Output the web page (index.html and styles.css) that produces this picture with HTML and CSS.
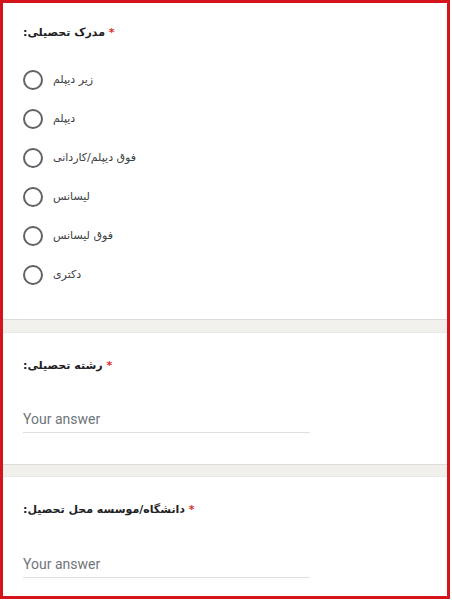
FILE: index.html
```html
<!DOCTYPE html>
<html lang="fa">
<head>
<meta charset="utf-8">
<link rel="stylesheet" href="styles.css">
</head>
<body>
<div class="frame">
  <section class="card card-first">
    <div class="title"><span dir="rtl"><span class="req">*</span> مدرک تحصیلی:</span></div>
    <div class="options">
      <label class="option"><span class="radio"></span><span class="opt-text" dir="rtl">زیر دیپلم</span></label>
      <label class="option"><span class="radio"></span><span class="opt-text" dir="rtl">دیپلم</span></label>
      <label class="option"><span class="radio"></span><span class="opt-text" dir="rtl">فوق دیپلم/کاردانی</span></label>
      <label class="option"><span class="radio"></span><span class="opt-text" dir="rtl">لیسانس</span></label>
      <label class="option"><span class="radio"></span><span class="opt-text" dir="rtl">فوق لیسانس</span></label>
      <label class="option"><span class="radio"></span><span class="opt-text" dir="rtl">دکتری</span></label>
    </div>
  </section>
  <div class="band"></div>
  <section class="card card-second">
    <div class="title"><span dir="rtl"><span class="req">*</span> رشته تحصیلی:</span></div>
    <div class="answer">Your answer</div>
  </section>
  <div class="band band-2"></div>
  <section class="card card-third">
    <div class="title"><span dir="rtl"><span class="req">*</span> دانشگاه/موسسه محل تحصیل:</span></div>
    <div class="answer">Your answer</div>
  </section>
</div>
</body>
</html>
```
FILE: styles.css
```css
html, body {
  margin: 0;
  padding: 0;
  background: #ffffff;
}
.frame {
  box-sizing: border-box;
  width: 450px;
  height: 599px;
  border: 3px solid #d3141c;
  display: flex;
  flex-direction: column;
  background: #ffffff;
  font-family: "DejaVu Sans", "Noto Sans", sans-serif;
}
.card {
  background: #ffffff;
  padding: 0 20px;
  box-sizing: border-box;
}
.card-first {
  height: 316px;
  padding-top: 20px;
}
.card-second {
  height: 131px;
  padding-top: 23px;
}
.card-third {
  flex: 1;
  padding-top: 23px;
}
.title {
  height: 20px;
  line-height: 20px;
  font-size: 11px;
  font-weight: bold;
  color: #202124;
}
.req {
  color: #d93025;
}
.options {
  margin-top: 17px;
  display: flex;
  flex-direction: column;
}
.option {
  height: 39px;
  display: flex;
  align-items: center;
  gap: 10px;
}
.radio {
  box-sizing: border-box;
  width: 20px;
  height: 20px;
  border: 2px solid #5f6368;
  border-radius: 50%;
  flex: none;
}
.opt-text {
  font-size: 11px;
  color: #3c4043;
}
.answer {
  margin-top: 33px;
  width: 287px;
  font-family: Roboto, "Liberation Sans", sans-serif;
  font-size: 14px;
  line-height: 20px;
  color: #70757a;
  padding-bottom: 3px;
  border-bottom: 1px solid #e0e0e0;
}
.card-third .answer {
  margin-top: 34px;
}
.band {
  height: 14px;
  box-sizing: border-box;
  background: #f1f0ec;
  border-top: 1px solid #dedcd8;
  border-bottom: 1px solid #e8e8e8;
}
.band-2 {
  height: 13px;
}
```
